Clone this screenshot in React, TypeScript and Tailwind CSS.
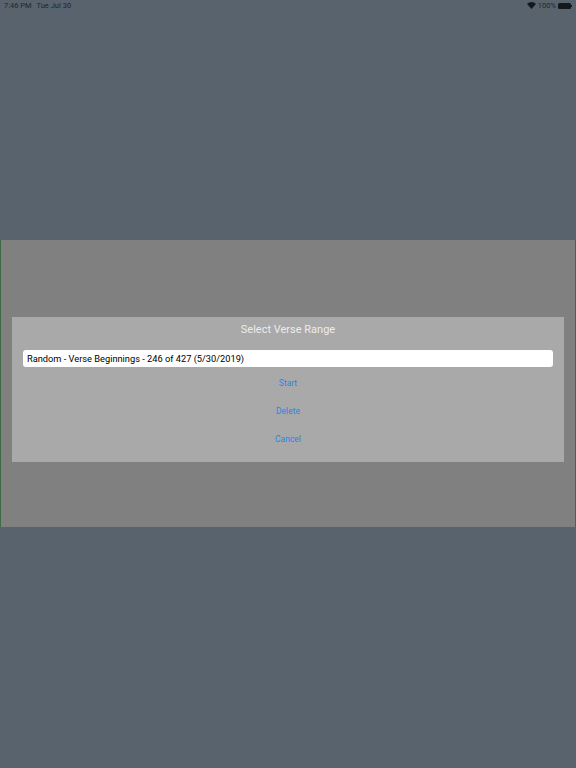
const ACTIONS = ["Start", "Delete", "Cancel"];

function StatusBar() {
  return (
    <div className="flex h-[11px] items-center justify-between px-[4px] font-['Roboto',sans-serif] text-[7.5px] text-[#20262c]">
      <div className="flex gap-[5px]">
        <span>7:46 PM</span>
        <span>Tue Jul 30</span>
      </div>
      <div className="flex items-center gap-[2px]">
        <svg width="9" height="7" viewBox="0 0 18 14" className="fill-[#15191d]">
          <path d="M9 14 0 4.2C5-1.2 13-1.2 18 4.2Z" />
        </svg>
        <span>100%</span>
        <div className="flex items-center">
          <div className="h-[6px] w-[13px] rounded-[1.5px] bg-[#15191d]" />
          <div className="h-[2px] w-[1px] bg-[#15191d]" />
        </div>
      </div>
    </div>
  );
}

export default function App() {
  return (
    <div className="flex h-[768px] w-[576px] flex-col overflow-hidden bg-[#59636e] font-['Roboto',sans-serif]">
      <StatusBar />
      <div className="h-[229px]" />
      <div className="flex h-[287px] flex-col border-x border-[#3d6b45] bg-[#808080] px-[11px] pt-[77px]">
        <div className="flex h-[145px] flex-col bg-[#a9a9a9] px-[11px]">
          <h2 className="mt-[6px] text-center text-[11px] leading-[14px] text-[#ececec]">Select Verse Range</h2>
          <div className="mt-[13px] flex h-[17px] items-center rounded-[3px] bg-white px-[4px] text-[9.25px] text-black">
            Random - Verse Beginnings - 246 of 427 (5/30/2019)
          </div>
          <div className="mt-[2px] flex flex-col">
            {ACTIONS.map((a) => (
              <button key={a} className="h-[28px] text-[8.5px] text-[#2a84ef]">
                {a}
              </button>
            ))}
          </div>
        </div>
      </div>
    </div>
  );
}
